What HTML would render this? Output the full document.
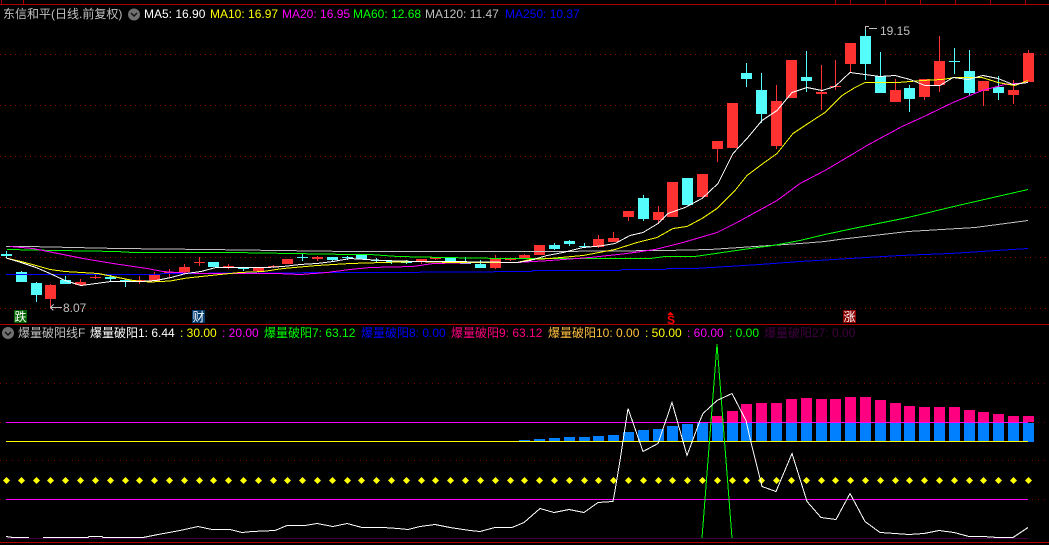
<!DOCTYPE html>
<html><head><meta charset="utf-8"><style>
html,body{margin:0;padding:0;background:#000;width:1049px;height:545px;overflow:hidden}
svg{display:block}
text{font-family:"Liberation Sans","WenQuanYi Zen Hei","Noto Sans CJK SC",sans-serif;font-size:12px}
.l{fill:none;stroke-width:1;shape-rendering:crispEdges}
</style></head><body>
<svg width="1049" height="545" viewBox="0 0 1049 545">
<defs><marker id="d" markerWidth="7" markerHeight="7" refX="3.5" refY="3.5" markerUnits="userSpaceOnUse"><path d="M0 3.5 3.5 0 7 3.5 3.5 7z" fill="#ff0"/></marker></defs>
<rect width="1049" height="545" fill="#000"/>
<!-- frame -->
<path class="l" stroke="#b00000" d="M0 4.5H1049M0 324.5H1049M0 542.5H1049M1.5 0V4M23.5 0V4M835.5 0V4M850.5 0V4M885.5 0V4M920.5 0V4M955.5 0V4M990.5 0V4M1025.5 0V4"/>
<!-- grid -->
<path class="l" stroke="#900000" stroke-dasharray="1 4" d="M0 54.5H1049M0 105.5H1049M0 156.5H1049M0 207.5H1049M0 257.5H1049M0 308.5H1049"/>
<path class="l" stroke="#800000" stroke-dasharray="1 5" d="M0 383.5H1049M0 422.5H1049M0 460.5H1049M0 499.5H1049"/>
<!-- candle wicks -->
<path class="l" stroke="#54fcfc" d="M6.5 251V258M21.5 271V282M36.5 282V302M65.5 276V284M110.5 275V281M125.5 279V287M243.5 267V271M302.5 254V261M332.5 257V262M347.5 256V260M376.5 258V262M391.5 260V264M406.5 260V264M465.5 257V264M480.5 260V268M554.5 243V250M569.5 240V246M584.5 243V248M643.5 195V221M746.5 63V87M761.5 73V123M806.5 51V92M865.5 26V80M880.5 52V93M909.5 85V112M954.5 48V74M969.5 50V96M998.5 76V100"/>
<path class="l" stroke="#ff3232" d="M50.5 284V307M80.5 279V285M95.5 274V279M139.5 276V284M154.5 272V282M169.5 269V277M184.5 264V273M199.5 257V266M228.5 264V269M258.5 267V273M273.5 265V268M317.5 256V261M421.5 259V264M435.5 257V260M495.5 255V269M510.5 259V261M524.5 254V258M598.5 235V248M613.5 232V242M628.5 211V221M658.5 206V224M717.5 141V162M776.5 85V149M821.5 65V110M835.5 60V90M850.5 43V72M895.5 79V102M924.5 79V100M939.5 36V92M983.5 81V106M1013.5 80V104M1028.5 50V82"/>
<!-- candle bodies -->
<path shape-rendering="crispEdges" fill="#54fcfc" d="M1 254h11v2h-11zM16 272h11v10h-11zM31 283h11v12h-11zM60 280h11v4h-11zM105 277h11v2h-11zM120 280h11v1h-11zM208 262h11v5h-11zM238 267h11v2h-11zM297 257h11v1h-11zM327 257h11v3h-11zM342 257h11v1h-11zM356 255h11v4h-11zM371 260h11v1h-11zM386 261h11v1h-11zM401 262h11v1h-11zM445 258h11v4h-11zM460 262h11v2h-11zM475 264h11v4h-11zM549 245h11v4h-11zM564 241h11v3h-11zM579 246h11v1h-11zM638 198h11v21h-11zM682 178h11v27h-11zM741 73h11v6h-11zM756 90h11v24h-11zM801 77h11v4h-11zM860 36h11v28h-11zM875 76h11v17h-11zM904 88h11v11h-11zM949 61h11v1h-11zM964 71h11v22h-11zM993 87h11v6h-11z"/>
<path shape-rendering="crispEdges" fill="#ff3232" d="M45 285h11v14h-11zM75 282h11v3h-11zM90 277h11v1h-11zM134 280h11v2h-11zM149 275h11v6h-11zM164 272h11v1h-11zM179 267h11v5h-11zM194 262h11v1h-11zM223 266h11v1h-11zM253 268h11v3h-11zM268 266h11v1h-11zM282 259h11v5h-11zM312 257h11v2h-11zM416 259h11v3h-11zM430 257h11v2h-11zM490 258h11v10h-11zM505 259h11v1h-11zM519 255h11v3h-11zM534 245h11v10h-11zM593 239h11v8h-11zM608 238h11v4h-11zM623 211h11v6h-11zM653 212h11v8h-11zM667 182h11v35h-11zM697 174h11v23h-11zM712 141h11v8h-11zM727 103h11v45h-11zM771 101h11v45h-11zM786 60h11v38h-11zM816 92h11v2h-11zM830 86h11v1h-11zM845 43h11v21h-11zM890 90h11v12h-11zM919 79h11v18h-11zM934 61h11v24h-11zM978 81h11v10h-11zM1008 90h11v5h-11zM1023 53h11v29h-11z"/>
<!-- MA lines -->
<polyline class="l" stroke="#0000ff" points="6,274.5 160,274.5 162,273.5 350,272.5 383,272.5 532,271.5 533,270.5 620,270.5 622,269.5 665,269.5 667,268.5 695,268.5 760,264.5 800,261.5 850,258.5 900,255.5 950,253.5 1028,248.5"/>
<polyline class="l" stroke="#c0c0c0" points="6,246.5 28,246.5 118,248.5 207,249.5 350,251.5 458,251.5 550,251.5 665,250.5 710,249.5 740,247.5 800,243.5 825,241.5 839,239.5 908,231.5 975,227.5 1028,220.5"/>
<polyline class="l" stroke="#00ff00" points="7,249.5 57,250.5 117,251.5 133,252.5 233,252.5 350,254.5 370,254.5 398,256.5 443,257.5 503,258.5 550,258.5 650,258.5 665,256.5 695,256.5 743,249.5 773,245.5 800,240.5 825,234.5 858,227.5 908,217.5 958,205.5 1028,189.5"/>
<polyline class="l" stroke="#ff00ff" points="10,246.5 33,248.5 53,252.5 83,258.5 113,263.5 147,268.5 163,271.5 177,272.5 200,273.5 240,273.5 277,273.5 300,274.5 327,272.5 350,269.5 370,267.5 413,266.5 433,263.5 483,262.5 517,262.5 550,260.5 590,257.5 627,253.5 655,249.5 683,242.5 717,232.5 737,222.5 777,200.5 800,183.5 825,170.5 852,154.5 867,145.5 902,126.5 922,117.5 953,102.5 982,90.5 1005,84.5 1028,82.5"/>
<polyline class="l" stroke="#ffff00" points="6,258 21,261.5 36,265.5 50,269.5 65,271.5 98,273.5 113,276.5 133,280.5 150,282 170,281 187,278 220,274.5 240,272.5 263,271.5 283,268.5 317,265.5 350,263.5 383,262.5 417,261.5 450,262.5 517,262.5 530,259.5 550,258.5 583,255.5 615,249.5 637,242.5 657,237.5 673,228.5 687,226.5 702,218.5 717,208.5 735,190.5 747,175.5 763,163.5 777,153.5 793,133.5 808,123.5 825,112.5 842,95.5 855,87.5 865,82.5 885,82.5 898,82.5 922,80.5 942,79.5 955,77.5 982,77.5 998,82.5 1015,85.5 1028,80.5"/>
<polyline class="l" stroke="#ffffff" points="6,258 21,262.5 36,267.5 50,273.5 65,280.5 81,285.5 96,283.5 111,281.5 126,281.5 141,281.5 156,280.5 171,277.5 186,273.5 201,271.5 216,267.5 233,267.5 250,267.5 267,267.5 283,266.5 300,264.5 317,263.5 333,261.5 350,258.5 383,260.5 417,261.5 450,261.5 517,262.5 530,260.5 547,255.5 563,252.5 583,247.5 600,246 615,243.5 630,235.5 643,232.5 658,223.5 668,213.5 685,207.5 702,198.5 718,183.5 733,153.5 747,138.5 762,120.5 777,110.5 792,92.5 807,87.5 822,90.5 835,86.5 850,72.5 865,74.5 880,76.5 895,75.5 910,79.5 925,85.5 940,85.5 953,77.5 968,79.5 983,75.5 998,78.5 1013,84.5 1028,82.5"/>
<!-- low/high marks -->
<path class="l" stroke="#c0c0c0" d="M50 307.5H62M50.5 307.5L53.5 304.5M50.5 307.5L53.5 310.5M865.5 26V30M865.5 26.5H869M869 28.5H877"/>
<text x="63" y="312" fill="#c0c0c0">8.07</text>
<text x="880" y="35" fill="#c0c0c0">19.15</text>
<!-- signals -->
<rect x="14" y="310" width="13" height="13" fill="#006400"/><text x="14.5" y="321" fill="#fff">跌</text>
<rect x="192" y="310" width="13" height="13" fill="#003a6e"/><text x="192.5" y="321" fill="#fff">财</text>
<path fill="#ff0000" shape-rendering="crispEdges" d="M670.5 311.5l3 3.5h-6z"/><text x="667" y="324" fill="#ff0000" style="font-weight:bold">S</text>
<rect x="843" y="310" width="13" height="13" fill="#8b0000"/><text x="843.5" y="321" fill="#fff">涨</text>
<!-- header -->
<text x="3" y="18" fill="#c0c0c0">东信和平(日线.前复权)</text>
<circle cx="134" cy="14.5" r="6" fill="#707070"/><path d="M131 13l3 3 3-3" fill="none" stroke="#111" stroke-width="1.4"/>
<text x="144" y="18" fill="#fff">MA5: 16.90</text>
<text x="210" y="18" fill="#ffff00">MA10: 16.97</text>
<text x="282" y="18" fill="#ff00ff">MA20: 16.95</text>
<text x="353" y="18" fill="#00ff00">MA60: 12.68</text>
<text x="425" y="18" fill="#c0c0c0">MA120: 11.47</text>
<text x="505" y="18" fill="#0000ff">MA250: 10.37</text>
<!-- lower header -->
<circle cx="8" cy="333" r="6" fill="#707070"/><path d="M5 332l3 3 3-3" fill="none" stroke="#111" stroke-width="1.4"/>
<text x="18" y="337" fill="#c0c0c0">爆量破阳线F</text>
<text x="90" y="337" fill="#fff">爆量破阳1: 6.44</text>
<text x="180" y="337" fill="#ffff00">: 30.00</text>
<text x="222" y="337" fill="#ff00ff">: 20.00</text>
<text x="264" y="337" fill="#00ff00">爆量破阳7: 63.12</text>
<text x="361" y="337" fill="#0000ff">爆量破阳8: 0.00</text>
<text x="451" y="337" fill="#ff0080">爆量破阳9: 63.12</text>
<text x="548" y="337" fill="#ffc040">爆量破阳10: 0.00</text>
<text x="645" y="337" fill="#ffff00">: 50.00</text>
<text x="687" y="337" fill="#ff00ff">: 60.00</text>
<text x="729" y="337" fill="#00ff00">: 0.00</text>
<text x="764" y="337" fill="#400040">爆量破阳27: 0.00</text>
<!-- bars -->
<path shape-rendering="crispEdges" fill="#ff0080" d="M712 416h11v6h-11zM727 411h11v11h-11zM741 404h11v18h-11zM756 403h11v19h-11zM771 403h11v19h-11zM786 399h11v23h-11zM801 398h11v24h-11zM816 399h11v23h-11zM830 399h11v23h-11zM845 397h11v25h-11zM860 397h11v25h-11zM875 400h11v22h-11zM890 403h11v19h-11zM904 406h11v16h-11zM919 407h11v15h-11zM934 407h11v15h-11zM949 407h11v15h-11zM964 410h11v12h-11zM978 412h11v10h-11zM993 414h11v8h-11zM1008 416h11v6h-11zM1023 416h11v6h-11z"/>
<path shape-rendering="crispEdges" fill="#0080ff" d="M519 440h11v1h-11zM534 439h11v2h-11zM549 438h11v3h-11zM564 437h11v4h-11zM579 437h11v4h-11zM593 436h11v5h-11zM608 435h11v6h-11zM623 432h11v9h-11zM638 430h11v11h-11zM653 429h11v12h-11zM667 426h11v15h-11zM682 424h11v17h-11zM697 423h11v18h-11zM712 423h11v18h-11zM727 423h11v18h-11zM741 423h11v18h-11zM756 423h11v18h-11zM771 423h11v18h-11zM786 423h11v18h-11zM801 423h11v18h-11zM816 423h11v18h-11zM830 423h11v18h-11zM845 423h11v18h-11zM860 423h11v18h-11zM875 423h11v18h-11zM890 423h11v18h-11zM904 423h11v18h-11zM919 423h11v18h-11zM934 423h11v18h-11zM949 423h11v18h-11zM964 423h11v18h-11zM978 423h11v18h-11zM993 423h11v18h-11zM1008 423h11v18h-11zM1023 423h11v19h-11z"/>
<!-- lower lines -->
<path class="l" stroke="#ff00ff" d="M6 422.5H1028M6 499.5H1028"/>
<path class="l" stroke="#ffff00" d="M6 441.5H1028"/>
<path class="l" stroke="#400040" d="M6 538.5H1028"/>
<polyline points="6,480 21,480 36,480 50,480 65,480 80,480 95,480 110,480 125,480 139,480 154,480 169,480 184,480 199,480 213,480 228,480 243,480 258,480 273,480 287,480 302,480 317,480 332,480 347,480 361,480 376,480 391,480 406,480 421,480 435,480 450,480 465,480 480,480 495,480 510,480 524,480 539,480 554,480 569,480 584,480 598,480 613,480 628,480 643,480 658,480 672,480 687,480 702,480 717,480 732,480 746,480 761,480 776,480 791,480 806,480 821,480 835,480 850,480 865,480 880,480 895,480 909,480 924,480 939,480 954,480 969,480 983,480 998,480 1013,480 1028,480" transform="translate(.5 .5)" fill="none" stroke="none" marker-start="url(#d)" marker-mid="url(#d)" marker-end="url(#d)"/>
<polyline class="l" stroke="#00ff00" points="702,538 717,344 732,538"/>
<polyline class="l" stroke="#fff" points="6,536.5 13,537.5 29,537.5"/>
<polyline class="l" stroke="#fff" points="43,537.5 88,537.5 89,536.5 102,536.5 103,537.5 143,537.5 158,534.5 180,530.5 198,526.5 212,529.5 230,529.5 242,532.5 252,531.5 275,530.5 287,525.5 305,525.5 317,523.5 333,526.5 347,523.5 362,527.5 383,527.5 398,528.5 408,529.5 420,526.5 435,524.5 450,527.5 470,530.5 480,531.5 495,527.5 512,527.5 524,522.5 540,508.5 554,512.5 569,509.5 584,512.5 598,502.5 613,501.5 615,490.5 620,460.5 628,408.5 643,451.5 658,443.5 672,402.5 687,455.5 700,420.5 703,413.5 717,400.5 732,393.5 746,420.5 751,442.5 762,486.5 776,491.5 792,453.5 807,501.5 821,517.5 836,519.5 850,493.5 865,521.5 880,532.5 895,533.5 909,534.5 924,533.5 939,530.5 954,532.5 969,536.5 983,536.5 998,537.5 1013,537.5 1028,527.5"/>
</svg>
</body></html>
